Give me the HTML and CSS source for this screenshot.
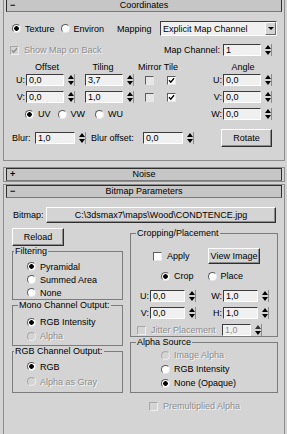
FILE: index.html
```html
<!DOCTYPE html>
<html lang="en">
<head>
  <meta charset="UTF-8" />
  <title>Bitmap Parameters</title>
  <link rel="stylesheet" href="styles.css">
</head>
<body>

  <div class="rollout first">
    <div class="head"><span class="sign">−</span><span class="title">Coordinates</span></div>
    <div class="coords">
      <div class="row r1">
        <span class="radio on tex"><i></i>Texture</span>
        <span class="radio env"><i></i>Environ</span>
        <span class="maplbl">Mapping</span>
        <span class="combo">Explicit Map Channel<b></b></span>
      </div>
      <div class="row r2">
        <span class="chk on dis back"><i><svg width="7" height="7" viewBox="0 0 7 7"><path d="M1 3.2 L2.8 5.2 L6 1.2" stroke="#8e8e8e" stroke-width="1.4" fill="none"/></svg></i>Show Map on Back</span>
        <span class="rgrp"><span class="chlbl">Map Channel:</span><span class="spin"><span class="fld">1</span><span class="arr"></span></span></span>
      </div>
      <div class="row r3">
        <span class="hd off">Offset</span>
        <span class="hd til">Tiling</span>
        <span class="hd mir">Mirror Tile</span>
        <span class="hd ang">Angle</span>
      </div>
      <div class="row r4">
        <span class="lab">U:</span>
        <span class="spin"><span class="fld">0,0</span><span class="arr"></span></span>
        <span class="spin tile"><span class="fld">3,7</span><span class="arr"></span></span>
        <span class="chk mchk"><i></i></span>
        <span class="chk on tchk"><i><svg width="7" height="7" viewBox="0 0 7 7"><path d="M1 3.2 L2.8 5.2 L6 1.2" stroke="#000" stroke-width="1.4" fill="none"/></svg></i></span>
        <span class="rgrp"><span class="lab">U:</span><span class="spin"><span class="fld">0,0</span><span class="arr"></span></span></span>
      </div>
      <div class="row r5">
        <span class="lab">V:</span>
        <span class="spin"><span class="fld">0,0</span><span class="arr"></span></span>
        <span class="spin tile"><span class="fld">1,0</span><span class="arr"></span></span>
        <span class="chk mchk"><i></i></span>
        <span class="chk on tchk"><i><svg width="7" height="7" viewBox="0 0 7 7"><path d="M1 3.2 L2.8 5.2 L6 1.2" stroke="#000" stroke-width="1.4" fill="none"/></svg></i></span>
        <span class="rgrp"><span class="lab">V:</span><span class="spin"><span class="fld">0,0</span><span class="arr"></span></span></span>
      </div>
      <div class="row r6">
        <span class="radio on uv"><i></i>UV</span>
        <span class="radio vw"><i></i>VW</span>
        <span class="radio wu"><i></i>WU</span>
        <span class="rgrp"><span class="lab">W:</span><span class="spin"><span class="fld">0,0</span><span class="arr"></span></span></span>
      </div>
      <div class="row r7">
        <span class="blurlbl">Blur:</span>
        <span class="spin wide"><span class="fld">1,0</span><span class="arr"></span></span>
        <span class="offlbl">Blur offset:</span>
        <span class="spin wide"><span class="fld">0,0</span><span class="arr"></span></span>
        <span class="btn rotate">Rotate</span>
      </div>
    </div>
  </div>

  <div class="rollout closed">
    <div class="head"><span class="sign">+</span><span class="title">Noise</span></div>
  </div>

  <div class="rollout second">
    <div class="head"><span class="sign">−</span><span class="title">Bitmap Parameters</span></div>
    <div class="bitmap">
      <div class="row brow">
        <span class="bmlbl">Bitmap:</span>
        <span class="btn path">C:\3dsmax7\maps\Wood\CONDTENCE.jpg</span>
      </div>
      <div class="cols">
        <div class="lcol">
          <span class="btn reload">Reload</span>
          <fieldset class="grp filt">
            <legend>Filtering</legend>
            <div class="opts">
              <span class="radio on"><i></i>Pyramidal</span>
              <span class="radio"><i></i>Summed Area</span>
              <span class="radio"><i></i>None</span>
            </div>
          </fieldset>
          <fieldset class="grp mono">
            <legend>Mono Channel Output:</legend>
            <div class="opts">
              <span class="radio on"><i></i>RGB Intensity</span>
              <span class="radio dis"><i></i>Alpha</span>
            </div>
          </fieldset>
          <fieldset class="grp rgb">
            <legend>RGB Channel Output:</legend>
            <div class="opts">
              <span class="radio on"><i></i>RGB</span>
              <span class="radio dis"><i></i>Alpha as Gray</span>
            </div>
          </fieldset>
        </div>
        <div class="rcol">
          <fieldset class="grp crop">
            <legend>Cropping/Placement</legend>
            <div class="row ca">
              <span class="chk apply"><i></i>Apply</span>
              <span class="btn view">View Image</span>
            </div>
            <div class="row cb">
              <span class="radio on cropr"><i></i>Crop</span>
              <span class="radio place"><i></i>Place</span>
            </div>
            <div class="row cc">
              <span class="lab">U:</span>
              <span class="spin small"><span class="fld">0,0</span><span class="arr"></span></span>
              <span class="lab wl">W:</span>
              <span class="spin small"><span class="fld">1,0</span><span class="arr"></span></span>
            </div>
            <div class="row cd">
              <span class="lab">V:</span>
              <span class="spin small"><span class="fld">0,0</span><span class="arr"></span></span>
              <span class="lab wl">H:</span>
              <span class="spin small"><span class="fld">1,0</span><span class="arr"></span></span>
            </div>
            <div class="row ce">
              <span class="chk dis jit"><i></i><span class="jitlbl">Jitter Placement</span></span>
              <span class="spin tiny dis"><span class="fld">1,0</span><span class="arr"></span></span>
            </div>
          </fieldset>
          <fieldset class="grp alpha">
            <legend>Alpha Source</legend>
            <div class="opts">
              <span class="radio dis"><i></i>Image Alpha</span>
              <span class="radio"><i></i>RGB Intensity</span>
              <span class="radio on"><i></i>None (Opaque)</span>
            </div>
          </fieldset>
          <div class="row premult">
            <span class="chk dis"><i></i>Premultiplied Alpha</span>
          </div>
        </div>
      </div>
    </div>
  </div>

</body>
</html>
```

FILE: styles.css
```css
* {
  box-sizing: border-box;
}

body {
  margin: 0;
  width: 287px;
  height: 434px;
  overflow: hidden;
  background: #d4d4d4;
  font: 9px "Liberation Sans", Arial, sans-serif;
  color: #000;
}

/* rollouts */

.rollout {
  margin: 0 2px 0 3px;
  padding: 0 2px;
  border: 1px solid #8c8c8c;
}

.first {
  margin-top: -2px;
}

.closed {
  margin-top: 6px;
}

.second {
  margin-top: 2px;
}

.head {
  height: 13px;
  border: 1px solid #2e2e2e;
  border-bottom-color: #7a7a7a;
  background: #c6c6c6;
  display: grid;
  grid-template-columns: 14px 1fr 14px;
  align-items: center;
  line-height: 11px;
}

.sign {
  padding-left: 3px;
  font-weight: bold;
}

.title {
  text-align: center;
}

.coords {
  height: 139px;
}

.bitmap {
  height: 238px;
}

.row {
  display: flex;
  align-items: center;
}

/* controls */

.radio,
.chk {
  display: inline-flex;
  align-items: center;
  white-space: nowrap;
}

.radio i,
.chk i {
  width: 9px;
  height: 9px;
  margin-right: 4px;
  background: #fff;
  border: 1px solid;
  border-color: #5c5c5c #e8e8e8 #e8e8e8 #5c5c5c;
  flex: none;
}

.radio i {
  border-radius: 50%;
}

.radio.on i {
  background: radial-gradient(circle, #000 0 2px, #fff 2.6px);
}

.chk i {
  display: flex;
  align-items: center;
  justify-content: center;
  margin-right: 5px;
}

.dis {
  color: #8e8e8e;
  text-shadow: 1px 1px #f4f4f4;
}

.dis i {
  background: #d4d4d4;
  border-color: #a8a8a8 #eee #eee #a8a8a8;
}

.radio.dis.on i {
  background: radial-gradient(circle, #8e8e8e 0 2px, #d4d4d4 2.6px);
}

.fld {
  width: 38px;
  height: 12px;
  line-height: 10px;
  padding-left: 2px;
  background: #f0f0f0;
  border: 1px solid;
  border-color: #3c3c3c #fff #fff #3c3c3c;
  white-space: nowrap;
}

.spin {
  display: flex;
  align-items: center;
}

.arr {
  margin-left: 4px;
  width: 7px;
  height: 12px;
  padding: 1px 0;
  display: flex;
  flex-direction: column;
  justify-content: space-between;
  align-items: center;
  background: #d4d4d4;
  border-right: 1px solid #8c8c8c;
}

.arr::before,
.arr::after {
  content: "";
  border-left: 3px solid transparent;
  border-right: 3px solid transparent;
}

.arr::before {
  border-bottom: 4px solid #000;
}

.arr::after {
  border-top: 4px solid #000;
}

.spin.dis .arr::before {
  border-bottom-color: #333;
}

.spin.dis .fld {
  color: #8e8e8e;
}

.btn {
  display: flex;
  align-items: center;
  justify-content: center;
  background: #d4d4d4;
  border: 1px solid;
  border-color: #fff #2e2e2e #2e2e2e #fff;
  box-shadow: inset -1px -1px #8c8c8c;
  white-space: nowrap;
}

.combo {
  width: 117px;
  height: 15px;
  margin-left: auto;
  margin-right: 5px;
  padding-left: 2px;
  display: flex;
  align-items: center;
  background: #f0f0f0;
  border: 1px solid;
  border-color: #3c3c3c #fff #fff #3c3c3c;
}

.combo b {
  margin-left: auto;
  width: 11px;
  height: 13px;
  display: flex;
  align-items: center;
  justify-content: center;
  background: #d4d4d4;
  border: 1px solid;
  border-color: #fff #6a6a6a #6a6a6a #fff;
}

.combo b::after {
  content: "";
  border-top: 3px solid #000;
  border-left: 3px solid transparent;
  border-right: 3px solid transparent;
}

.lab {
  width: 13px;
  padding-right: 1px;
  text-align: right;
}

.rgrp {
  margin-left: auto;
  margin-right: 10px;
  display: flex;
  align-items: center;
}

/* coordinates rows */

.r1 {
  margin-top: 9px;
  height: 15px;
}

.tex {
  margin-left: 6px;
}

.env {
  margin-left: 6px;
}

.maplbl {
  margin-left: 13px;
}

.r2 {
  margin-top: 8px;
  height: 12px;
}

.back {
  margin-left: 4px;
}

.chlbl {
  margin-right: 3px;
}

.r3 {
  margin-top: 6px;
  height: 10px;
}

.hd {
  width: 42px;
  text-align: center;
}

.off {
  margin-left: 20px;
}

.til {
  margin-left: 14px;
}

.mir {
  margin-left: 14px;
  width: auto;
}

.ang {
  margin-left: auto;
  margin-right: 18px;
}

.r4 {
  margin-top: 2px;
  height: 12px;
}

.r5,
.r6 {
  margin-top: 5px;
  height: 12px;
}

.r4 > .lab,
.r5 > .lab {
  margin-left: 7px;
}

.tile {
  margin-left: 10px;
}

.mchk {
  margin-left: 11px;
}

.mchk i {
  background: #e6e6e6;
}

.tchk {
  margin-left: 8px;
}

.uv {
  margin-left: 19px;
}

.vw {
  margin-left: 7px;
}

.wu {
  margin-left: 10px;
}

.r7 {
  margin-top: 9px;
  height: 18px;
}

.blurlbl {
  margin-left: 6px;
  width: 23px;
}

.wide .fld {
  width: 40px;
}

.offlbl {
  margin-left: 5px;
  width: 52px;
}

.rotate {
  margin-left: auto;
  margin-right: 10px;
  width: 51px;
  height: 18px;
}

/* bitmap parameters */

.brow {
  margin-top: 9px;
  height: 16px;
}

.bmlbl {
  margin-left: 7px;
  width: 33px;
}

.path {
  width: 230px;
  height: 16px;
}

.cols {
  margin-top: 5px;
  display: flex;
  align-items: flex-start;
}

.lcol {
  margin-left: 6px;
  width: 111px;
  display: flex;
  flex-direction: column;
}

.rcol {
  margin-left: 7px;
  width: 148px;
  display: flex;
  flex-direction: column;
}

.reload {
  width: 52px;
  height: 18px;
}

fieldset.grp {
  margin: 0;
  padding: 0;
  min-width: 0;
  border: 1px solid #7c7c7c;
}

.grp legend {
  height: 10px;
  line-height: 10px;
  padding: 0 1px;
  margin-left: 1px;
}

.opts {
  display: flex;
  flex-direction: column;
  padding-left: 14px;
}

.filt {
  margin-top: 13px;
}

.filt .opts {
  padding-top: 4px;
}

.filt .radio {
  height: 13px;
}

.mono {
  margin-top: 9px;
}

.mono legend {
  margin-left: 5px;
}

.mono .opts {
  padding-top: 5px;
  padding-bottom: 2px;
}

.mono .radio {
  height: 14px;
}

.rgb {
  margin-top: 9px;
}

.rgb .opts {
  padding-top: 3px;
  padding-bottom: 3px;
}

.rgb .radio {
  height: 15px;
}

.crop {
  margin-top: 2px;
  padding-bottom: 9px;
}

.crop legend,
.alpha legend {
  margin-left: 5px;
}

.ca {
  margin-top: 10px;
  height: 16px;
}

.apply {
  margin-left: 22px;
}

.view {
  margin-left: auto;
  margin-right: 17px;
  width: 52px;
  height: 16px;
}

.cb {
  margin-top: 6px;
  height: 12px;
}

.cropr {
  margin-left: 30px;
}

.place {
  margin-left: 14px;
}

.cc {
  margin-top: 8px;
  height: 12px;
}

.cd,
.ce {
  margin-top: 5px;
  height: 12px;
}

.cc > .lab,
.cd > .lab {
  margin-left: 6px;
}

.small .fld {
  width: 35px;
}

.cc > .wl,
.cd > .wl {
  margin-left: 14px;
}

.jit {
  margin-left: 6px;
}

.jitlbl {
  width: 71px;
}

.tiny .fld {
  width: 29px;
}

.alpha {
  margin-top: 6px;
}

.alpha .opts {
  padding-left: 30px;
  padding-top: 1px;
  padding-bottom: 2px;
}

.alpha .radio {
  height: 14px;
}

.premult {
  margin-top: 8px;
  height: 10px;
}

.premult .chk {
  margin-left: 19px;
}
```
